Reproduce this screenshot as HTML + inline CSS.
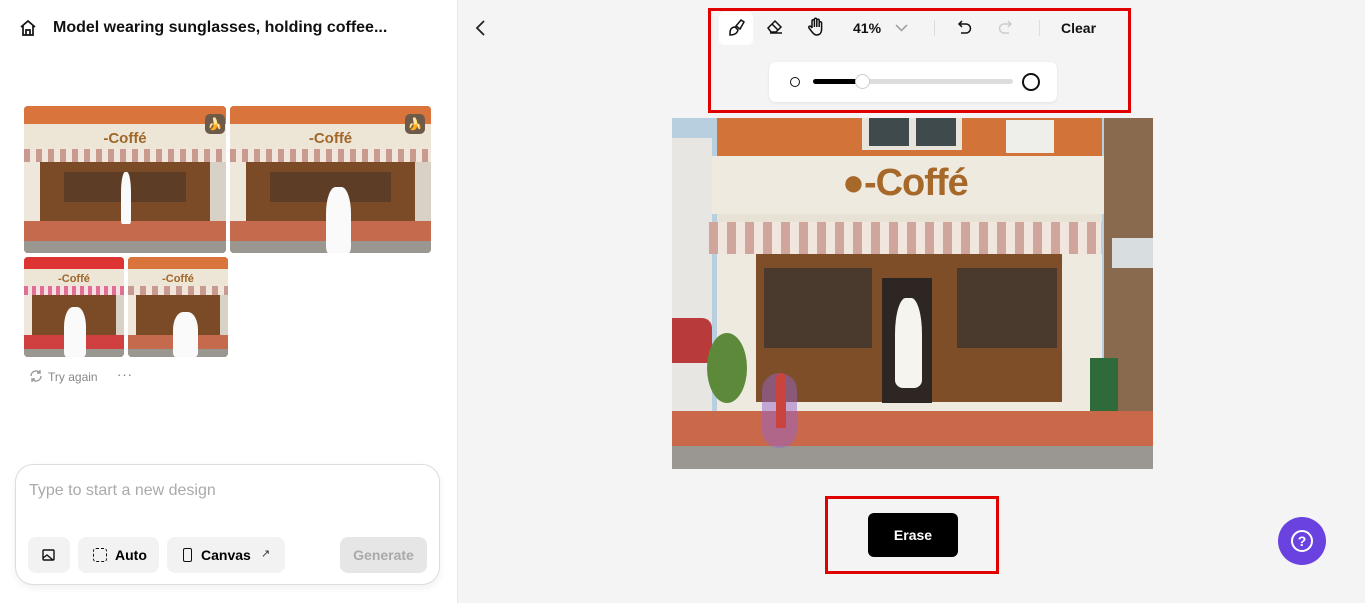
<!DOCTYPE html>
<html><head><meta charset="utf-8"><style>
*{margin:0;padding:0;box-sizing:border-box}
body{width:1365px;height:603px;overflow:hidden;font-family:"Liberation Sans",sans-serif;background:#f4f4f4;position:relative}
.left{position:absolute;left:0;top:0;width:458px;height:603px;background:#fff;border-right:1px solid #e6e6e6}
.abs{position:absolute}
.cafe{position:absolute;overflow:hidden;border-radius:4px;background:#8a5a34}
.cafe div{position:absolute;left:0;width:100%}
.c1{top:0;height:12%;background:#d9743c}
.c2{top:12%;height:17%;background:#ede6d6}
.c3{top:29%;height:9%;background:repeating-linear-gradient(90deg,#c99a90 0 6px,#f0e6dc 6px 12px)}
.c4{top:38%;height:40%;background:linear-gradient(90deg,#eee8dc 0 8%,#7b4a26 8% 92%,#d8d2c6 92%)}
.c4b{top:45%;height:20%;left:20%!important;width:60%!important;background:#4b3526;opacity:.6}
.c5{top:78%;height:14%;background:#c56a4c}
.c6{top:92%;height:8%;background:#9a9690}
.logo{top:16%;text-align:center;color:#a0662a;font-weight:bold}
.dress{left:48%!important;width:5%!important;top:45%;height:35%;background:#fafafa;border-radius:40% 40% 10% 10%}
.m{position:absolute}
</style></head><body>
<div class="left">
 <svg class="abs" style="left:19px;top:19px" width="18" height="18" viewBox="0 0 18 18" fill="none" stroke="#111" stroke-width="1.7"><path d="M2 8L9 2l7 6M4 7v9h10V7M7 16v-5h4v5"/></svg>
 <div class="abs" style="left:53px;top:19px;font-size:16px;font-weight:bold;color:#111">Model wearing sunglasses, holding coffee...</div>

 <div class="cafe" style="left:24px;top:106px;width:202px;height:147px"><div class="c1"></div><div class="c2"></div><div class="c3"></div><div class="c4"></div><div class="c4b"></div><div class="c5"></div><div class="c6"></div><div class="logo" style="font-size:15px">-Coffé</div><div class="dress"></div></div>
 <div class="cafe" style="left:230px;top:106px;width:201px;height:147px"><div class="c1"></div><div class="c2"></div><div class="c3"></div><div class="c4"></div><div class="c4b"></div><div class="c5"></div><div class="c6"></div><div class="logo" style="font-size:15px">-Coffé</div><div class="dress" style="width:12%!important;top:55%;height:45%"></div></div>
 <div class="cafe" style="left:24px;top:257px;width:100px;height:100px"><div class="c1" style="background:#d33"></div><div class="c2"></div><div class="c3" style="background:repeating-linear-gradient(90deg,#e07090 0 4px,#f5e0e6 4px 8px)"></div><div class="c4"></div><div class="c5" style="background:#d04040"></div><div class="c6"></div><div class="logo" style="font-size:11px">-Coffé</div><div class="dress" style="left:40%!important;width:22%!important;top:50%;height:50%"></div></div>
 <div class="cafe" style="left:128px;top:257px;width:100px;height:100px"><div class="c1"></div><div class="c2"></div><div class="c3"></div><div class="c4"></div><div class="c5"></div><div class="c6"></div><div class="logo" style="font-size:11px">-Coffé</div><div class="dress" style="left:45%!important;width:25%!important;top:55%;height:45%"></div></div>
 <div class="abs" style="left:205px;top:114px;width:20px;height:20px;border-radius:5px;background:#6d5a48;color:#f3c400;font-size:12px;text-align:center;line-height:20px">🍌</div>
 <div class="abs" style="left:405px;top:114px;width:20px;height:20px;border-radius:5px;background:#6d5a48;color:#f3c400;font-size:12px;text-align:center;line-height:20px">🍌</div>

 <svg class="abs" style="left:29px;top:369px" width="14" height="14" viewBox="0 0 14 14" fill="none" stroke="#999" stroke-width="1.4"><path d="M2 7a5 5 0 0 1 9-3M12 7a5 5 0 0 1-9 3M11 1v3H8M3 13v-3h3"/></svg>
 <div class="abs" style="left:48px;top:370px;font-size:12px;color:#888">Try again</div>
 <div class="abs" style="left:117px;top:367px;font-size:13px;color:#777;letter-spacing:1px">···</div>

 <div class="abs" style="left:15px;top:464px;width:425px;height:121px;border:1px solid #ddd;border-radius:18px;background:#fff;box-shadow:0 3px 8px rgba(0,0,0,.06)">
  <div class="abs" style="left:13px;top:17px;font-size:16px;color:#aaa">Type to start a new design</div>
  <div class="abs" style="left:12px;top:72px;width:42px;height:36px;border-radius:8px;background:#f2f2f2"><svg class="abs" style="left:14px;top:12px" width="13" height="12" viewBox="0 0 13 12" fill="none" stroke="#111" stroke-width="1.4"><rect x="1" y="1" width="11" height="10" rx="1"/><path d="M1 9l4-3 6 5"/></svg></div>
  <div class="abs" style="left:62px;top:72px;width:81px;height:36px;border-radius:8px;background:#f2f2f2"><div class="abs" style="left:15px;top:11px;width:14px;height:14px;border:1.6px dashed #111;border-radius:3px"></div><div class="abs" style="left:37px;top:10px;font-size:14px;font-weight:bold">Auto</div></div>
  <div class="abs" style="left:151px;top:72px;width:118px;height:36px;border-radius:8px;background:#f2f2f2"><div class="abs" style="left:16px;top:11px;width:9px;height:14px;border:1.5px solid #111;border-radius:2px"></div><div class="abs" style="left:34px;top:10px;font-size:14px;font-weight:bold">Canvas</div><div class="abs" style="left:94px;top:10px;font-size:11px;color:#333">↗</div></div>
  <div class="abs" style="left:324px;top:72px;width:87px;height:36px;border-radius:8px;background:#e6e6e6;color:#aaa;font-size:14px;font-weight:bold;text-align:center;line-height:36px">Generate</div>
 </div>
</div>

<svg class="abs" style="left:475px;top:20px" width="12" height="16" viewBox="0 0 12 16" fill="none" stroke="#222" stroke-width="1.8"><path d="M9 1L2 8l7 7"/></svg>

<div class="abs" style="left:708px;top:8px;width:423px;height:105px;border:3px solid #e00000"></div>
<div class="abs" style="left:719px;top:12px;width:34px;height:33px;background:#fff;border-radius:5px"></div>
<svg class="abs" style="left:727px;top:18px" width="20" height="20" viewBox="0 0 20 20" fill="none" stroke="#111" stroke-width="1.5"><path d="M9 8l5-6 3 2-4 7z"/><path d="M8 9c-3 0-5 2-5 6 0 1 0 2 0 2 4 0 7-1 8-5z"/></svg>
<svg class="abs" style="left:766px;top:19px" width="18" height="16" viewBox="0 0 18 16" fill="none" stroke="#111" stroke-width="1.5"><path d="M2 9l7-7 6 6-5 5H5z"/><path d="M6 5l6 6M4 14h12"/></svg>
<svg class="abs" style="left:807px;top:17px" width="18" height="20" viewBox="0 0 18 20" fill="none" stroke="#111" stroke-width="1.5"><path d="M5 11V4a1.2 1.2 0 0 1 2.4 0v6V2.5a1.2 1.2 0 0 1 2.4 0V10V3.5a1.2 1.2 0 0 1 2.4 0V10V6a1.2 1.2 0 0 1 2.4 0v6c0 4-2 6-5 6-2 0-3-1-4.5-3L2 11a1.2 1.2 0 0 1 2-1.4L5 11"/></svg>
<div class="abs" style="left:853px;top:20px;font-size:14px;font-weight:bold;color:#111">41%</div>
<svg class="abs" style="left:895px;top:24px" width="13" height="8" viewBox="0 0 13 8" fill="none" stroke="#999" stroke-width="1.5"><path d="M1 1l5.5 5.5L12 1"/></svg>
<div class="abs" style="left:934px;top:20px;width:1px;height:16px;background:#ddd"></div>
<svg class="abs" style="left:957px;top:20px" width="16" height="16" viewBox="0 0 16 16" fill="none" stroke="#111" stroke-width="1.5"><path d="M5 1L2 4l3 3M2 4h7a4.5 4.5 0 0 1 0 9H4"/></svg>
<svg class="abs" style="left:997px;top:20px" width="16" height="16" viewBox="0 0 16 16" fill="none" stroke="#ccc" stroke-width="1.5"><path d="M11 1l3 3-3 3M14 4H7a4.5 4.5 0 0 0 0 9h5"/></svg>
<div class="abs" style="left:1039px;top:20px;width:1px;height:16px;background:#ddd"></div>
<div class="abs" style="left:1061px;top:20px;font-size:14px;font-weight:bold;color:#111">Clear</div>

<div class="abs" style="left:769px;top:62px;width:288px;height:40px;background:#fff;border-radius:7px;box-shadow:0 1px 3px rgba(0,0,0,.08)"></div>
<div class="abs" style="left:790px;top:77px;width:10px;height:10px;border:1.5px solid #111;border-radius:50%"></div>
<div class="abs" style="left:813px;top:79px;width:200px;height:5px;background:#ddd;border-radius:3px"></div>
<div class="abs" style="left:813px;top:79px;width:50px;height:5px;background:#000;border-radius:3px"></div>
<div class="abs" style="left:855px;top:74px;width:15px;height:15px;background:#fff;border:1px solid #ccc;border-radius:50%"></div>
<div class="abs" style="left:1022px;top:73px;width:18px;height:18px;border:2px solid #111;border-radius:50%"></div>

<!-- main image 481x351 -->
<div class="abs" style="left:672px;top:118px;width:481px;height:351px;overflow:hidden;background:#b8cfe0">
 <div class="m" style="left:0;top:20px;width:40px;height:280px;background:#e8e6e2"></div>
 <div class="m" style="left:0;top:200px;width:40px;height:45px;background:#b83a3a;border-radius:0 10px 0 0"></div>
 <div class="m" style="left:432px;top:0;width:49px;height:300px;background:#8a6a4e"></div>
 <div class="m" style="left:440px;top:120px;width:41px;height:30px;background:#d8dde0"></div>
 <div class="m" style="left:45px;top:0;width:385px;height:40px;background:#d2743a"></div>
 <div class="m" style="left:190px;top:0;width:100px;height:32px;background:#e8e4dc"></div>
 <div class="m" style="left:197px;top:0;width:40px;height:28px;background:#3e4a4c"></div>
 <div class="m" style="left:244px;top:0;width:40px;height:28px;background:#3e4a4c"></div>
 <div class="m" style="left:334px;top:2px;width:48px;height:33px;background:#eeeeea"></div>
 <div class="m" style="left:40px;top:38px;width:392px;height:58px;background:#eeeadf"></div>
 <div class="m" style="left:170px;top:44px;font-size:38px;font-weight:bold;color:#a6692a;letter-spacing:-1px">●-Coffé</div>
 <div class="m" style="left:45px;top:96px;width:385px;height:8px;background:#e8e2d6"></div>
 <div class="m" style="left:37px;top:104px;width:392px;height:32px;background:repeating-linear-gradient(90deg,#cfa59c 0 9px,#f1e6de 9px 18px)"></div>
 <div class="m" style="left:45px;top:136px;width:385px;height:160px;background:#eeeae0"></div>
 <div class="m" style="left:84px;top:136px;width:306px;height:148px;background:#7e4e28"></div>
 <div class="m" style="left:92px;top:150px;width:108px;height:80px;background:#4a3a2e"></div>
 <div class="m" style="left:285px;top:150px;width:100px;height:80px;background:#4a3a2e"></div>
 <div class="m" style="left:210px;top:160px;width:50px;height:125px;background:#2e2622"></div>
 <div class="m" style="left:223px;top:180px;width:27px;height:90px;background:#f6f4ee;border-radius:40% 40% 8px 8px"></div>
 <div class="m" style="left:35px;top:215px;width:40px;height:70px;background:#5c8a3a;border-radius:50%"></div>
 <div class="m" style="left:418px;top:240px;width:28px;height:55px;background:#2e6a3a"></div>
 <div class="m" style="left:0;top:293px;width:481px;height:35px;background:#c9694a"></div>
 <div class="m" style="left:0;top:328px;width:481px;height:23px;background:#9a9792"></div>
 <div class="m" style="left:90px;top:255px;width:35px;height:75px;background:rgba(150,100,200,.5);border-radius:18px"></div>
 <div class="m" style="left:104px;top:255px;width:10px;height:55px;background:#c8443c;border-radius:5px 5px 0 0"></div>
</div>

<div class="abs" style="left:825px;top:496px;width:174px;height:78px;border:3px solid #e00000"></div>
<div class="abs" style="left:868px;top:513px;width:90px;height:44px;background:#000;border-radius:6px;color:#fff;font-size:14px;font-weight:bold;text-align:center;line-height:44px">Erase</div>

<div class="abs" style="left:1278px;top:517px;width:48px;height:48px;border-radius:50%;background:#6a42e0"></div>
<div class="abs" style="left:1291px;top:530px;width:22px;height:22px;border:2px solid #fff;border-radius:50%;color:#fff;font-weight:bold;font-size:14px;text-align:center;line-height:18px">?</div>
</body></html>
